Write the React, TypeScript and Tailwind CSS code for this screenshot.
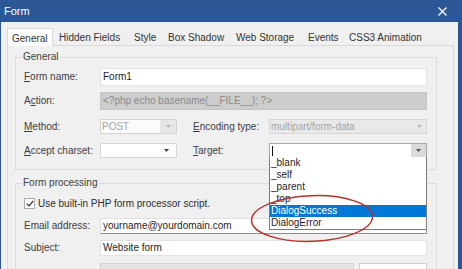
import type { ReactNode } from 'react';

const tabs = [
  { name: 'Hidden Fields', w: 'w-[75px]' },
  { name: 'Style', w: 'w-[34px]' },
  { name: 'Box Shadow', w: 'w-[68px]' },
  { name: 'Web Storage', w: 'w-[72px]' },
  { name: 'Events', w: 'w-[41px]' },
  { name: 'CSS3 Animation', w: 'w-[90px]' },
];

const targets = ['_blank', '_self', '_parent', '_top', 'DialogSuccess', 'DialogError'];

function Arrow({ color }: { color: string }) {
  return (
    <svg width="5" height="3" viewBox="0 0 5 3">
      <path d="M0 0h5L2.5 3z" fill={color} />
    </svg>
  );
}

function Label({ children, w = 'w-[76px]' }: { children: ReactNode; w?: string }) {
  return <span className={`${w} shrink-0 text-[#3d3d3d]`}>{children}</span>;
}

function U({ children }: { children: ReactNode }) {
  return <span className="underline underline-offset-[1px]">{children}</span>;
}

function Group({ title, children, className }: { title: string; children: ReactNode; className?: string }) {
  return (
    <div className={`relative border border-[#dcdcdc] pl-[8px] pr-[9px] ${className ?? ''}`}>
      <span className="absolute left-[6px] -top-[6px] h-[10px] px-[1px] bg-[#f0f0f0] leading-[10px] text-[#3d3d3d]">
        {title}
      </span>
      {children}
    </div>
  );
}

export default function App() {
  return (
    <div className="relative w-[462px] h-[269px] overflow-hidden flex flex-col bg-[#2b5797] text-[10px] leading-none [font-family:'Liberation_Sans',Arial,sans-serif]">
      {/* title bar */}
      <div className="h-[22px] shrink-0 flex items-center justify-between pl-[4px] pr-[15px] text-white text-[11px]">
        <span>Form</span>
        <svg width="9" height="9" viewBox="0 0 9 9">
          <path d="M0.5 0.5l8 8M8.5 0.5l-8 8" stroke="#fff" strokeWidth="1.3" />
        </svg>
      </div>

      <div className="flex-1 flex flex-col ml-px mr-[4px] bg-[#f0f0f0] pt-[6px] pl-[6px] pr-[4px]">
        {/* tabs */}
        <div className="relative z-10 flex h-[18px] -mb-px text-[#333]">
          <div className="w-[46px] h-[18px] bg-white border border-b-0 border-[#d9d9d9] pl-[4px] pt-[5px]">General</div>
          {tabs.map((t) => (
            <div key={t.name} className={`${t.w} shrink-0 pl-[6px] pt-[5px] whitespace-nowrap`}>
              {t.name}
            </div>
          ))}
        </div>

        {/* tab panel */}
        <div className="flex-1 border border-[#d9d9d9] pt-[11px] pl-[7px] pr-[16px]">
          <Group title="General" className="z-20 pt-[10px] pb-[11px]">
            <div className="flex items-center h-[18px]">
              <Label>
                <U>F</U>orm name:
              </Label>
              <div className="flex-1 h-full flex items-center bg-white border border-[#e3e3e3] pl-[2px] text-[#1e1e1e]">Form1</div>
            </div>
            <div className="flex items-center h-[18px] mt-[6px]">
              <Label>
                A<U>c</U>tion:
              </Label>
              <div className="flex-1 h-full flex items-center bg-[#cdcdcd] border border-[#c4c4c4] pl-[2px] text-[#8c8c8c]">
                {'<?php echo basename(__FILE__); ?>'}
              </div>
            </div>
            <div className="flex items-center h-[15px] mt-[9px]">
              <Label>
                <U>M</U>ethod:
              </Label>
              <div className="w-[77px] h-full flex items-center bg-[#fbfbfb] border border-[#d2d2d2] pl-[1px] text-[#a4a4a4]">
                <span className="flex-1">POST</span>
                <span className="w-[16px] h-full flex items-center justify-center bg-[#e6e6e6]">
                  <Arrow color="#b4b4b4" />
                </span>
              </div>
              <span className="w-[16px]" />
              <Label>
                <U>E</U>ncoding type:
              </Label>
              <div className="flex-1 h-full flex items-center bg-[#e9e9e9] border border-[#d6d6d6] pl-[1px] text-[#a4a4a4]">
                <span className="flex-1">multipart/form-data</span>
                <span className="w-[14px] h-full flex items-center justify-center">
                  <Arrow color="#bcbcbc" />
                </span>
              </div>
            </div>
            <div className="flex items-center h-[15px] mt-[9px]">
              <Label>
                <U>A</U>ccept charset:
              </Label>
              <div className="w-[77px] h-full flex items-center justify-end bg-white border border-[#d6d6d6] pr-[7px]">
                <Arrow color="#444" />
              </div>
              <span className="w-[16px]" />
              <Label>
                <U>T</U>arget:
              </Label>
              <div className="relative flex-1 h-full flex items-center bg-white border border-[#a9a9a9]">
                <span className="ml-[2px] w-px h-[10px] bg-[#111]" />
                <span className="flex-1" />
                <span className="w-[15px] h-full flex items-center justify-center bg-[#dadada]">
                  <Arrow color="#555" />
                </span>
                <div className="absolute z-30 left-[-1px] right-[-1px] top-full bg-white border border-t-0 border-[#7c7c7c] text-[#1e1e1e]">
                  {targets.map((t) => (
                    <div
                      key={t}
                      className={`h-[12px] flex items-center pl-[1px] ${t === 'DialogSuccess' ? 'bg-[#0078d7] text-white' : ''}`}
                    >
                      {t}
                    </div>
                  ))}
                </div>
              </div>
            </div>
          </Group>

          <Group title="Form processing" className="mt-[13px] pt-[14px] pb-[10px]">
            <div className="flex items-center h-[11px]">
              <span className="w-[11px] h-[11px] flex items-center justify-center bg-white border border-[#adadad]">
                <svg width="8" height="7" viewBox="0 0 8 7">
                  <path d="M0.8 3.6l2.2 2.2L7.2 1" stroke="#333" strokeWidth="1.2" fill="none" />
                </svg>
              </span>
              <span className="ml-[3px] text-[#2d2d2d]">Use built-in PHP form processor script.</span>
            </div>
            <div className="flex items-center h-[16px] mt-[9px]">
              <Label>Email address:</Label>
              <div className="flex-1 h-full flex items-center bg-white border border-[#e0e0e0] border-r-[#8e8e8e] border-b-[#8e8e8e] pl-[2px] text-[#1e1e1e]">
                yourname@yourdomain.com
              </div>
            </div>
            <div className="flex items-center h-[16px] mt-[6px]">
              <Label>Subject:</Label>
              <div className="flex-1 h-full flex items-center bg-white border border-[#e3e3e3] pl-[2px] text-[#1e1e1e]">
                Website form
              </div>
            </div>
            <div className="flex items-center h-[16px] mt-[7px]">
              <Label>{''}</Label>
              <div className="flex-1 h-full bg-[#e4e4e4] border border-[#d2d2d2]" />
              <div className="w-[68px] ml-[5px] h-full bg-[#fdfdfd] border border-[#d0d0d0]" />
            </div>
          </Group>
        </div>
      </div>

      {/* annotation */}
      <svg className="absolute z-40 left-[250px] top-[193px]" width="126" height="52" viewBox="0 0 126 52">
        <ellipse cx="62" cy="25.5" rx="60.5" ry="22.8" fill="none" stroke="#b3332c" strokeWidth="1.5" transform="rotate(-2 62 25.5)" />
      </svg>
    </div>
  );
}
